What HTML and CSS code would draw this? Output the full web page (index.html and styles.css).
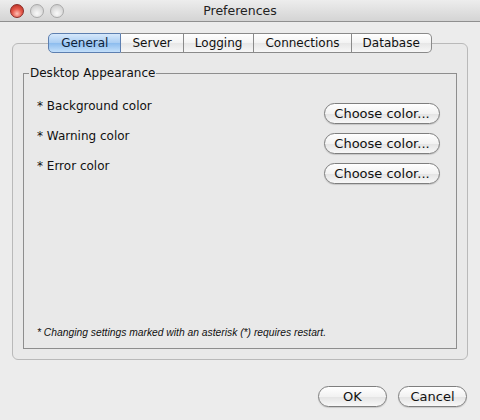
FILE: index.html
```html
<!DOCTYPE html>
<html>
<head>
<meta charset="utf-8">
<link rel="stylesheet" href="styles.css">
</head>
<body>
<div class="window">
  <div class="titlebar">
    <div class="lights">
      <span class="light close"></span>
      <span class="light"></span>
      <span class="light"></span>
    </div>
    <div class="title">Preferences</div>
    <div></div>
  </div>
  <div class="content">
    <div class="tabs">
      <span class="tab selected">General</span>
      <span class="tab">Server</span>
      <span class="tab">Logging</span>
      <span class="tab">Connections</span>
      <span class="tab">Database</span>
    </div>
    <div class="panel">
      <fieldset class="group">
        <legend class="legend">Desktop Appearance</legend>
        <div class="row">
          <span class="label">* Background color</span>
          <button class="btn choose">Choose color...</button>
        </div>
        <div class="row">
          <span class="label">* Warning color</span>
          <button class="btn choose">Choose color...</button>
        </div>
        <div class="row">
          <span class="label">* Error color</span>
          <button class="btn choose">Choose color...</button>
        </div>
        <div class="note">* Changing settings marked with an asterisk (*) requires restart.</div>
      </fieldset>
    </div>
  </div>
  <div class="footer">
    <button class="btn ok">OK</button>
    <button class="btn cancel">Cancel</button>
  </div>
</div>
</body>
</html>
```

FILE: styles.css
```css
html, body {
  margin: 0;
  padding: 0;
}
body {
  width: 480px;
  height: 420px;
  background: #ececec;
  font-family: "DejaVu Sans", "Liberation Sans", sans-serif;
  font-size: 12px;
  color: #111;
  overflow: hidden;
}
.window {
  width: 480px;
  height: 420px;
  display: flex;
  flex-direction: column;
}
.titlebar {
  height: 21px;
  flex: none;
  display: grid;
  grid-template-columns: 1fr auto 1fr;
  align-items: center;
  background: linear-gradient(#ededed, #d4d4d4);
  border-bottom: 1px solid #8f8f8f;
}
.lights {
  display: flex;
  gap: 6px;
  padding-left: 10px;
}
.light {
  width: 14px;
  height: 14px;
  border-radius: 50%;
  box-sizing: border-box;
  border: 1px solid #a9a9a9;
  background: radial-gradient(circle at 50% 70%, #fafafa 0%, #dcdcdc 55%, #c4c4c4 100%);
}
.light.close {
  border-color: #8a2a24;
  background: radial-gradient(circle at 50% 72%, #ffc0b5 0%, #e65a4c 45%, #b0281d 100%);
}
.title {
  font-size: 12.5px;
  color: #222;
}
.content {
  flex: 1;
  display: flex;
  flex-direction: column;
  padding: 11px 12px 0 12px;
}
.tabs {
  align-self: center;
  display: flex;
  height: 20px;
  position: relative;
  z-index: 2;
}
.tab {
  box-sizing: border-box;
  height: 20px;
  line-height: 18px;
  padding: 0 11px;
  border: 1px solid #8a8a8a;
  border-left: none;
  background: linear-gradient(#ffffff, #f3f3f3 50%, #e6e6e6 51%, #f7f7f7);
  font-size: 12px;
  color: #111;
}
.tab:first-child {
  border-left: 1px solid #5d7fb0;
  border-radius: 5px 0 0 5px;
}
.tab:last-child {
  border-radius: 0 5px 5px 0;
}
.tab.selected {
  border-color: #5d7fb0;
  background: linear-gradient(#d6e8fb, #a9cdf3 50%, #8cbcee 51%, #c4e0fb);
  padding: 0 12px;
  color: #0d1f3a;
}
.panel {
  flex: 1;
  margin-top: -10px;
  border: 1px solid #b9b9b9;
  border-radius: 6px;
  background: #e9e9e9;
  display: flex;
  flex-direction: column;
  padding: 21px 10px 10px 10px;
}
.group {
  flex: 1;
  margin: 0;
  border: 1px solid #8e8e8e;
  padding: 17px 16px 8px 13px;
  display: flex;
  flex-direction: column;
  gap: 3px;
  min-width: 0;
}
.legend {
  margin-left: -8px;
  padding: 1px 1px 0 1px;
  font-size: 12px;
  line-height: 15px;
  color: #111;
}
.row {
  display: flex;
  justify-content: space-between;
  align-items: flex-start;
  height: 27px;
}
.label {
  line-height: 16px;
}
.btn {
  font-family: "DejaVu Sans", "Liberation Sans", sans-serif;
  font-size: 13px;
  color: #111;
  height: 21px;
  box-sizing: border-box;
  border: 1px solid #7e7e7e;
  border-radius: 11px;
  background: linear-gradient(#ffffff, #f2f2f2 50%, #e3e3e3 51%, #f8f8f8);
  box-shadow: 0 1px 1px rgba(0,0,0,0.15);
  padding: 0;
}
.choose {
  width: 116px;
  margin-top: 5px;
}
.note {
  margin-top: auto;
  font-family: "Liberation Sans", sans-serif;
  font-style: italic;
  font-size: 10.3px;
  line-height: 14px;
}
.footer {
  height: 60px;
  flex: none;
  display: flex;
  justify-content: flex-end;
  align-items: flex-start;
  gap: 11px;
  padding: 26px 13px 0 0;
  box-sizing: border-box;
}
.ok, .cancel {
  width: 69px;
}
```
